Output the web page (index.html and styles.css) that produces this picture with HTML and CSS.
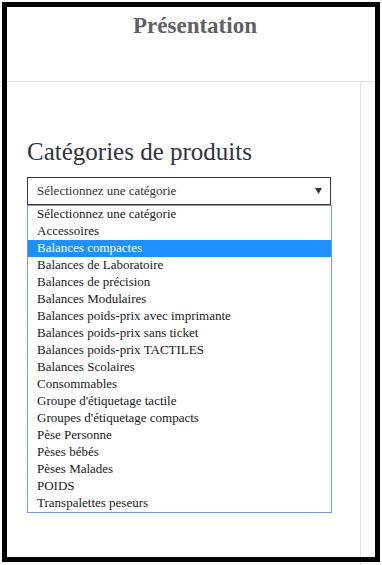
FILE: index.html
```html
<!DOCTYPE html>
<html lang="fr">
<head>
<meta charset="utf-8">
<title>Présentation</title>
<link rel="stylesheet" href="styles.css">
</head>
<body>
<div class="page">
  <header class="header">
    <h1 class="title">Présentation</h1>
  </header>
  <div class="body-row">
    <main class="main">
      <h2 class="heading">Catégories de produits</h2>
      <div class="select">
        <span class="select-text">Sélectionnez une catégorie</span>
        <svg class="arrow" width="7" height="6" viewBox="0 0 7 6"><polygon points="0,0 7,0 3.5,6" fill="#333"/></svg>
      </div>
      <ul class="options">
        <li class="option">Sélectionnez une catégorie</li>
        <li class="option">Accessoires</li>
        <li class="option selected">Balances compactes</li>
        <li class="option">Balances de Laboratoire</li>
        <li class="option">Balances de précision</li>
        <li class="option">Balances Modulaires</li>
        <li class="option">Balances poids-prix avec imprimante</li>
        <li class="option">Balances poids-prix sans ticket</li>
        <li class="option">Balances poids-prix TACTILES</li>
        <li class="option">Balances Scolaires</li>
        <li class="option">Consommables</li>
        <li class="option">Groupe d'étiquetage tactile</li>
        <li class="option">Groupes d'étiquetage compacts</li>
        <li class="option">Pèse Personne</li>
        <li class="option">Pèses bébés</li>
        <li class="option">Pèses Malades</li>
        <li class="option">POIDS</li>
        <li class="option">Transpalettes peseurs</li>
      </ul>
    </main>
    <aside class="side"></aside>
  </div>
  <div class="frame"></div>
</div>
</body>
</html>
```

FILE: styles.css
```css
html, body {
  margin: 0;
  padding: 0;
  background: #fff;
}
body {
  font-family: "Liberation Serif", "Times New Roman", serif;
}
.page {
  position: relative;
  min-height: 565px;
  display: flex;
  flex-direction: column;
}
.header {
  height: 81px;
  border-bottom: 1px solid #e0e0e0;
  box-sizing: content-box;
}
.title {
  margin: 0;
  padding: 13px 0 0 8px;
  text-align: center;
  font-size: 23px;
  font-weight: bold;
  color: #5f6166;
  line-height: 26px;
}
.body-row {
  flex: 1;
  display: flex;
}
.main {
  width: 361px;
  border-right: 1px solid #e0e0e0;
  padding: 0 0 0 27px;
  box-sizing: border-box;
}
.side {
  flex: 1;
}
.heading {
  margin: 56px 0 0 0;
  font-size: 25px;
  font-weight: normal;
  line-height: 28px;
  color: #2e3440;
}
.select {
  margin-top: 11px;
  width: 304px;
  height: 28px;
  box-sizing: border-box;
  border: 1px solid #343a40;
  display: flex;
  align-items: center;
  justify-content: space-between;
  padding: 0 8px 0 9px;
  font-size: 13px;
  color: #333;
}
.arrow {
  display: block;
  margin-top: -1px;
}
.options {
  list-style: none;
  margin: 0;
  padding: 0;
  width: 305px;
  box-sizing: border-box;
  border: 1px solid #7b9bd6;
}
.option {
  height: 17px;
  line-height: 15px;
  padding: 0 0 2px 9px;
  box-sizing: border-box;
  font-size: 13px;
  color: #1a1a1a;
  white-space: nowrap;
}
.option.selected {
  background: #1e90ff;
  color: #fff;
}
.frame {
  position: absolute;
  left: 2px;
  top: 2px;
  width: 378px;
  height: 560px;
  box-sizing: border-box;
  border: 5px solid #000;
  pointer-events: none;
}
```
